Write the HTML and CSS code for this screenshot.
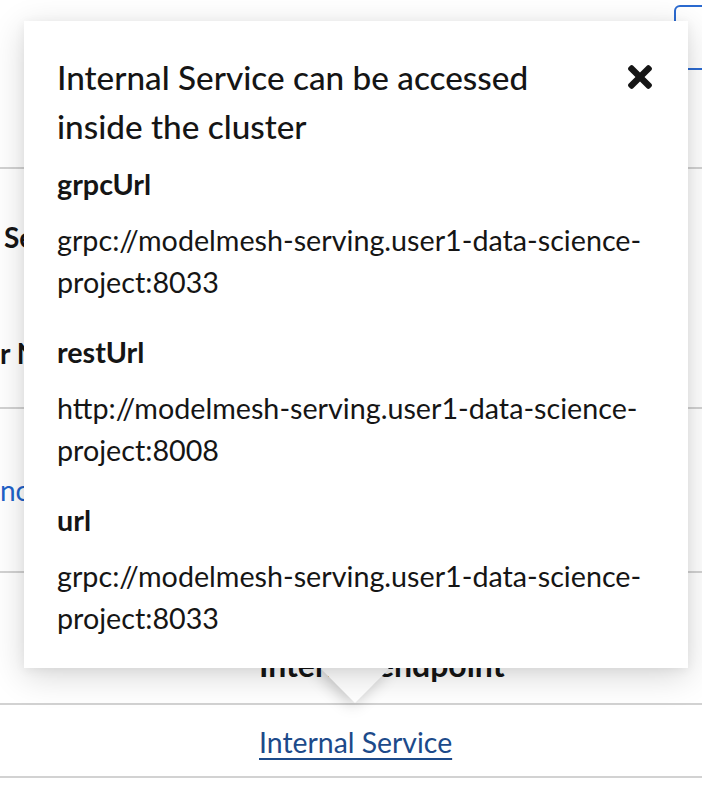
FILE: index.html
```html
<!DOCTYPE html>
<html lang="en">
<head>
<meta charset="utf-8">
<title>Internal Service popover</title>
<link rel="stylesheet" href="styles.css">
</head>
<body>
<div class="page">
  <div class="toolbar">
    <div class="btn-outline"></div>
  </div>
  <div class="row row-a">
    <div class="cell-left">
      <div class="bold-text t-se">Se</div>
      <div class="bold-text t-rn">r N</div>
    </div>
  </div>
  <div class="row row-b">
    <div class="cell-left">
      <span class="blue-text">no</span>
    </div>
  </div>
  <div class="row row-c">
    <div class="cell-col">
      <span class="bold-text col-head">Internal endpoint</span>
    </div>
  </div>
  <div class="row row-d">
    <div class="cell-col">
      <a class="link" href="#">Internal Service</a>
    </div>
  </div>
</div>

<div class="popover" role="dialog">
  <div class="popover-arrow"></div>
  <div class="popover-body">
    <button class="close" aria-label="Close">
      <svg width="24" height="24" viewBox="0 80 352 352" aria-hidden="true"><path fill="#151515" d="M242.72 256l100.07-100.07c12.28-12.28 12.28-32.19 0-44.48l-22.24-22.24c-12.28-12.28-32.19-12.28-44.48 0L176 189.28 75.930 89.21c-12.28-12.28-32.19-12.28-44.48 0L9.21 111.45c-12.28 12.28-12.28 32.19 0 44.48L109.28 256 9.21 356.07c-12.28 12.28-12.28 32.19 0 44.48l22.240 22.24c12.28 12.28 32.2 12.28 44.48 0L176 322.72l100.07 100.07c12.28 12.28 32.2 12.28 44.480 0l22.24-22.24c12.28-12.28 12.28-32.19 0-44.48L242.72 256z"/></svg>
    </button>
    <h2 class="popover-title">Internal Service can be accessed inside the cluster</h2>
    <dl class="urls">
      <dt>grpcUrl</dt>
      <dd>grpc://modelmesh-serving.user1-data-science-project:8033</dd>
      <dt>restUrl</dt>
      <dd>http://modelmesh-serving.user1-data-science-project:8008</dd>
      <dt>url</dt>
      <dd>grpc://modelmesh-serving.user1-data-science-project:8033</dd>
    </dl>
  </div>
</div>
</body>
</html>
```
FILE: styles.css
```css
* { box-sizing: border-box; }
html, body { margin: 0; padding: 0; }
body {
  width: 702px;
  height: 792px;
  overflow: hidden;
  background: #fff;
  color: #151515;
  font-family: Lato, "Liberation Sans", sans-serif;
  position: relative;
}
.page {
  display: flex;
  flex-direction: column;
}
.toolbar {
  height: 167px;
  padding-top: 5px;
  display: flex;
  justify-content: flex-end;
}
.btn-outline {
  width: 60px;
  height: 65px;
  margin-right: -32px;
  border: 2px solid #2b6ad0;
  border-radius: 6px;
}
.row {
  border-top: 2px solid #d2d2d2;
}
.row-a { height: 240px; }
.row-b { height: 164px; }
.row-c { height: 132px; }
.row-d { height: 75px; border-bottom: 2px solid #d2d2d2; }

.cell-left {
  display: flex;
  flex-direction: column;
  align-items: flex-start;
}
.bold-text {
  font-size: 28px;
  font-weight: 700;
  line-height: 42px;
  white-space: nowrap;
}
.col-head { font-size: 32px; }
.t-se { margin-top: 47px; margin-left: 4px; }
.t-rn { margin-top: 74px; margin-left: 0; }
.blue-text {
  margin-top: 60px;
  margin-left: 0;
  font-size: 28px;
  line-height: 42px;
  color: #1f62c9;
}
.cell-col {
  padding-left: 259px;
}
.row-c .cell-col { padding-top: 71px; line-height: 42px; }
.row-d .cell-col { padding-top: 16px; line-height: 42px; }
.link {
  font-size: 28.4px;
  color: #1c4a8a;
  text-decoration: underline;
  text-decoration-thickness: 2px;
  text-underline-offset: 5px;
}

.popover {
  position: absolute;
  left: 24px;
  top: 21px;
  width: 664px;
  z-index: 10;
}
.popover-body {
  position: relative;
  background: #fff;
  padding: 32px 32px 29px 33px;
  box-shadow: 0 8px 32px rgba(3, 3, 3, 0.16), 0 2px 10px rgba(3, 3, 3, 0.06);
}
.popover-arrow {
  position: absolute;
  left: 307px;
  bottom: -25px;
  width: 48px;
  height: 48px;
  background: #fff;
  transform: rotate(45deg);
  box-shadow: 0 4px 16px rgba(3, 3, 3, 0.22);
}
.close {
  position: absolute;
  top: 32px;
  right: 24px;
  width: 48px;
  height: 48px;
  padding: 0;
  border: 0;
  background: transparent;
  display: flex;
  align-items: center;
  justify-content: center;
}
.popover-title {
  margin: 0 72px 12px 0;
  font-size: 33.3px;
  font-weight: 500;
  line-height: 49px;
}
.urls { margin: 0; }
.urls dt {
  font-size: 28.7px;
  font-weight: 700;
  line-height: 42px;
  margin-bottom: 14px;
}
.urls dd {
  margin: 0 0 28px 0;
  font-size: 28.7px;
  line-height: 42px;
}
.urls dd:last-child { margin-bottom: 0; }
```
